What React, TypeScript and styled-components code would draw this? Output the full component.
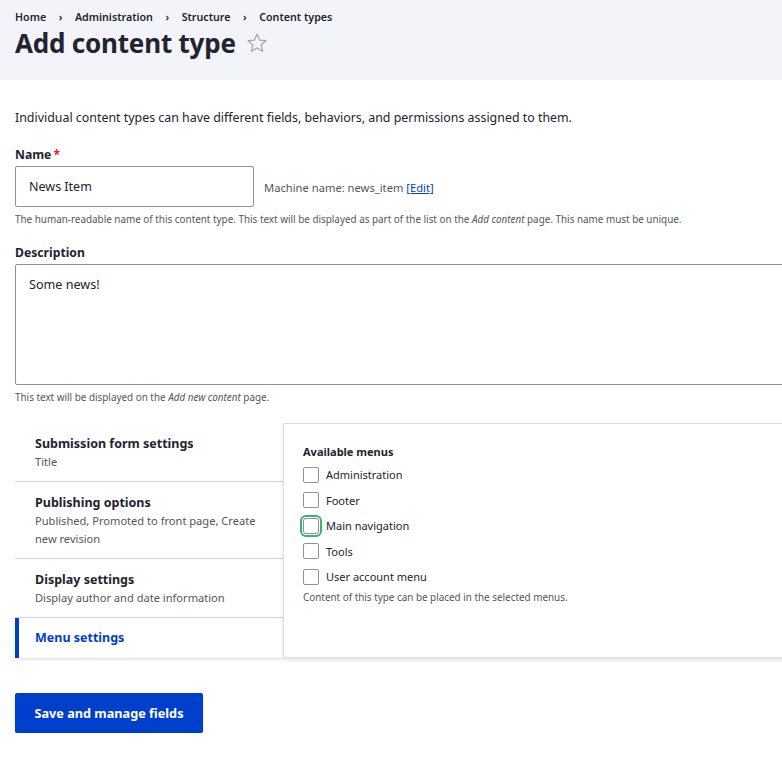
import React from "react";
import styled, { createGlobalStyle } from "styled-components";

const GlobalStyle = createGlobalStyle`
  html, body {
    margin: 0;
    padding: 0;
    overflow-x: hidden;
  }
  body {
    font-family: "Noto Sans", "Open Sans", sans-serif;
    color: #222330;
    background: #ffffff;
  }
`;

const Header = styled.header`
  background: #f3f4f9;
  height: 80px;
  padding: 9px 15px 0;
  box-sizing: border-box;
`;

const Crumbs = styled.nav`
  display: flex;
  align-items: center;
  font-size: 10.7px;
  font-weight: 600;
  line-height: 16px;
`;

const Sep = styled.span`
  margin: 0 12.5px;
  color: #222330;
`;

const TitleRow = styled.div`
  display: flex;
  align-items: center;
  gap: 10px;
  margin-top: 1px;
`;

const Title = styled.h1`
  margin: 0;
  font-size: 26px;
  font-weight: 700;
  line-height: 34px;
  letter-spacing: -0.2px;
`;

const Main = styled.main`
  width: 900px;
  padding: 28px 15px 0;
  box-sizing: border-box;
`;

const Intro = styled.p`
  margin: 0 0 18px;
  font-size: 12.4px;
  line-height: 20px;
`;

const Field = styled.div`
  margin-bottom: 18px;
`;

const Label = styled.label`
  display: block;
  font-size: 12.2px;
  font-weight: 700;
  line-height: 18px;
  margin-bottom: 2px;
`;

const Required = styled.span`
  color: #dc2323;
  margin-left: 2px;
`;

const InputRow = styled.div`
  display: flex;
  align-items: center;
  gap: 10px;
`;

const TextInput = styled.div`
  width: 239px;
  height: 41px;
  box-sizing: border-box;
  border: 1px solid #8e929c;
  border-radius: 2px;
  padding: 0 13px;
  display: flex;
  align-items: center;
  font-size: 12.5px;
`;

const Machine = styled.span`
  font-size: 11.2px;
  color: #545560;
  margin-top: 2px;
  a {
    color: #003ecc;
    text-decoration: underline;
  }
`;

const Help = styled.div`
  font-size: 9.9px;
  line-height: 14px;
  color: #545560;
  margin-top: 5px;
`;

const TextArea = styled.div`
  width: 870px;
  height: 121px;
  box-sizing: border-box;
  border: 1px solid #8e929c;
  border-radius: 2px;
  padding: 10px 13px;
  font-size: 12.6px;
  line-height: 20px;
`;

const Tabs = styled.div`
  display: flex;
  align-items: flex-start;
  margin-top: 19px;
`;

const TabMenu = styled.ul`
  list-style: none;
  margin: 0;
  padding: 0;
  width: 268px;
  flex-shrink: 0;
`;

const TabItem = styled.li<{ $active?: boolean }>`
  box-sizing: border-box;
  padding: ${(p) => (p.$active ? "11px 20px 11px 16px" : "12px 20px 10px 20px")};
  border-bottom: 1px solid #d3d4d9;
  border-left: ${(p) => (p.$active ? "4px solid #003ecc" : "none")};
  background: #ffffff;
  ${(p) => (p.$active ? "border-bottom: none; box-shadow: 0 2px 3px -1px rgba(0,0,0,0.15);" : "")}
`;

const TabTitle = styled.div<{ $active?: boolean }>`
  font-size: 12.5px;
  font-weight: 700;
  line-height: 18px;
  color: ${(p) => (p.$active ? "#003ecc" : "#222330")};
`;

const TabSummary = styled.div`
  font-size: 11.1px;
  line-height: 18px;
  color: #545560;
`;

const Panel = styled.div`
  flex: 1;
  height: 235px;
  box-sizing: border-box;
  border: 1px solid #dedfe4;
  border-right: none;
  box-shadow: 0 2px 4px rgba(0, 0, 0, 0.12);
  padding: 19px 19px;
`;

const Legend = styled.div`
  font-size: 11px;
  font-weight: 700;
  line-height: 18px;
  margin-bottom: 1px;
`;

const CheckRow = styled.label`
  display: flex;
  align-items: center;
  gap: 7px;
  height: 25.5px;
  font-size: 11px;
`;

const Box = styled.span<{ $focus?: boolean }>`
  width: 14px;
  height: 14px;
  border: 1px solid #8e929c;
  border-radius: 2px;
  box-sizing: content-box;
  ${(p) => (p.$focus ? "box-shadow: 0 0 0 1px #fff, 0 0 0 3px #3cb371; border-radius: 3px;" : "")}
`;

const PanelHelp = styled.div`
  font-size: 9.9px;
  color: #545560;
`;

const SaveButton = styled.button`
  margin-top: 35px;
  width: 188px;
  height: 40px;
  background: #003ecc;
  color: #ffffff;
  border: none;
  border-radius: 2px;
  font-family: inherit;
  font-size: 12.7px;
  font-weight: 700;
  box-shadow: 0 1px 2px rgba(0, 0, 0, 0.2);
`;

const Star = () => (
  <svg width="22" height="22" viewBox="0 0 24 24" fill="none" stroke="#a0a3ab" strokeWidth="1.3" strokeLinejoin="round">
    <path d="M12 2.5l2.9 6.3 6.8.7-5.1 4.6 1.5 6.8L12 17.4l-6.1 3.5 1.5-6.8L2.3 9.5l6.8-.7z" />
  </svg>
);

const menus = ["Administration", "Footer", "Main navigation", "Tools", "User account menu"];

export default function App() {
  return (
    <>
      <GlobalStyle />
      <Header>
        <Crumbs>
          <span>Home</span>
          <Sep>›</Sep>
          <span>Administration</span>
          <Sep>›</Sep>
          <span>Structure</span>
          <Sep>›</Sep>
          <span>Content types</span>
        </Crumbs>
        <TitleRow>
          <Title>Add content type</Title>
          <Star />
        </TitleRow>
      </Header>
      <Main>
        <Intro>Individual content types can have different fields, behaviors, and permissions assigned to them.</Intro>
        <Field>
          <Label>
            Name<Required>*</Required>
          </Label>
          <InputRow>
            <TextInput>News Item</TextInput>
            <Machine>
              Machine name: news_item <a>[Edit]</a>
            </Machine>
          </InputRow>
          <Help>
            The human-readable name of this content type. This text will be displayed as part of the list on the <em>Add content</em> page. This name must be unique.
          </Help>
        </Field>
        <Field>
          <Label>Description</Label>
          <TextArea>Some news!</TextArea>
          <Help>
            This text will be displayed on the <em>Add new content</em> page.
          </Help>
        </Field>
        <Tabs>
          <TabMenu>
            <TabItem>
              <TabTitle>Submission form settings</TabTitle>
              <TabSummary>Title</TabSummary>
            </TabItem>
            <TabItem>
              <TabTitle>Publishing options</TabTitle>
              <TabSummary>Published, Promoted to front page, Create new revision</TabSummary>
            </TabItem>
            <TabItem>
              <TabTitle>Display settings</TabTitle>
              <TabSummary>Display author and date information</TabSummary>
            </TabItem>
            <TabItem $active>
              <TabTitle $active>Menu settings</TabTitle>
            </TabItem>
          </TabMenu>
          <Panel>
            <Legend>Available menus</Legend>
            {menus.map((m) => (
              <CheckRow key={m}>
                <Box $focus={m === "Main navigation"} />
                {m}
              </CheckRow>
            ))}
            <PanelHelp>Content of this type can be placed in the selected menus.</PanelHelp>
          </Panel>
        </Tabs>
        <SaveButton>Save and manage fields</SaveButton>
      </Main>
    </>
  );
}
